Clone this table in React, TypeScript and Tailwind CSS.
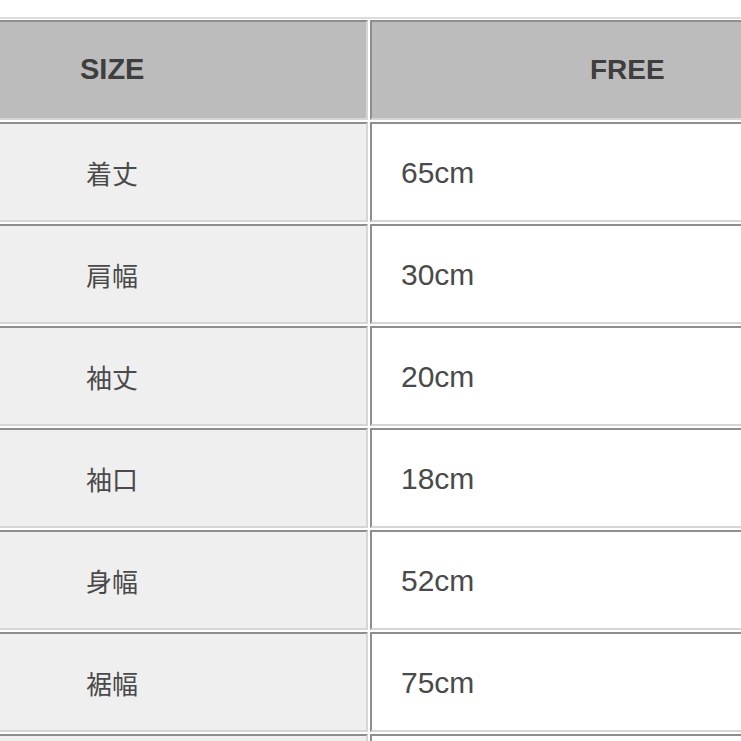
import React from "react";

const rows: [string, string][] = [
  ["着丈", "65cm"],
  ["肩幅", "30cm"],
  ["袖丈", "20cm"],
  ["袖口", "18cm"],
  ["身幅", "52cm"],
  ["裾幅", "75cm"],
  ["", ""],
];

export default function App() {
  return (
    <div
      className="w-[741px] h-[741px] overflow-hidden bg-white"
      style={{ fontFamily: '"Liberation Sans", Arial, "Noto Sans CJK JP", sans-serif' }}
    >
      <div className="h-[17px]" />
      <div className="h-[2px] bg-[#dcdcdc]" />
      <div className="h-[1px]" />
      <div className="grid grid-cols-[368px_1fr] gap-x-[2px] gap-y-[2px] w-[760px]">
        <div className="h-[100px] bg-[#bcbcbc] border-t-2 border-t-[#8e8e8e] border-b-2 border-r-2 border-b-[#d6d6d6] border-r-[#d6d6d6] flex items-center pl-[80px]">
          <span className="text-[29px] font-bold text-[#3e3e3e]">SIZE</span>
        </div>
        <div className="h-[100px] bg-[#bcbcbc] border-t-2 border-l-2 border-t-[#8e8e8e] border-l-[#8e8e8e] border-b-2 border-b-[#d6d6d6] flex items-center pl-[218px]">
          <span className="text-[28px] font-bold text-[#3e3e3e]">FREE</span>
        </div>
        {rows.map(([k, v], i) => (
          <React.Fragment key={i}>
            <div className="h-[100px] bg-[#efefef] border-t-2 border-t-[#8e8e8e] border-b-2 border-r-2 border-b-[#d6d6d6] border-r-[#d6d6d6] flex items-center pl-[86px]">
              <span
                className="text-[26px] text-[#4a4a4a]"
                style={{ fontFamily: '"Noto Sans CJK JP", sans-serif' }}
              >
                {k}
              </span>
            </div>
            <div className="h-[100px] bg-white border-t-2 border-l-2 border-t-[#8e8e8e] border-l-[#8e8e8e] border-b-2 border-b-[#d6d6d6] flex items-center pl-[29px]">
              <span className="text-[30px] text-[#4a4a4a]">{v}</span>
            </div>
          </React.Fragment>
        ))}
      </div>
    </div>
  );
}
